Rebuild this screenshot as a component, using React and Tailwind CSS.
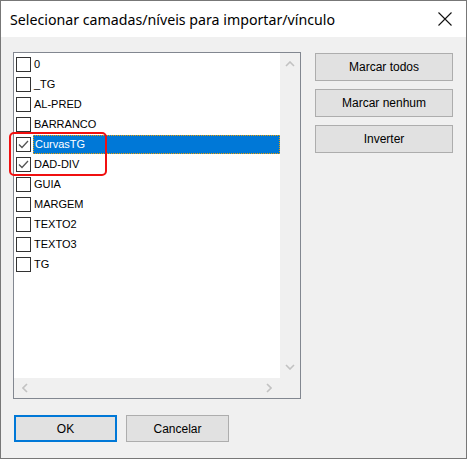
import { useState } from 'react';

const layers = ['0', '_TG', 'AL-PRED', 'BARRANCO', 'CurvasTG', 'DAD-DIV', 'GUIA', 'MARGEM', 'TEXTO2', 'TEXTO3', 'TG'];

function Chevron({ dir }) {
  const paths = {
    up: 'M1 5 L5 1 L9 5',
    down: 'M1 1 L5 5 L9 1',
    left: 'M5 1 L1 5 L5 9',
    right: 'M1 1 L5 5 L1 9',
  };
  const vertical = dir === 'up' || dir === 'down';
  return (
    <svg width={vertical ? 10 : 6} height={vertical ? 6 : 10} viewBox={vertical ? '0 0 10 6' : '0 0 6 10'}>
      <path d={paths[dir]} fill="none" stroke="#c2c2c2" strokeWidth="1.6" />
    </svg>
  );
}

function Check({ checked }) {
  return (
    <div className="w-[15px] h-[15px] border border-[#333] bg-white flex items-center justify-center shrink-0">
      {checked && (
        <svg width="11" height="9" viewBox="0 0 11 9">
          <path d="M1 4.5 L4 7.5 L10 1" fill="none" stroke="#555" strokeWidth="1.3" />
        </svg>
      )}
    </div>
  );
}

function Button({ children, primary, className = '' }) {
  return (
    <button
      className={
        'bg-[#e1e1e1] text-[12px] text-black flex items-center justify-center ' +
        (primary ? 'border-2 border-[#0078d7] ' : 'border border-[#adadad] ') +
        className
      }
    >
      {children}
    </button>
  );
}

export default function App() {
  const [checked] = useState({ CurvasTG: true, 'DAD-DIV': true });
  const selected = 'CurvasTG';

  return (
    <div className="w-[467px] h-[459px] border border-[#777] bg-[#f0f0f0] flex flex-col" style={{ fontFamily: '"Liberation Sans", Arial, sans-serif' }}>
      <div className="h-[36px] bg-white flex items-center justify-between pl-[9px] pr-[14px] shrink-0">
        <span className="text-[14.2px] text-black pt-[1px]" style={{ fontFamily: '"Noto Sans", "Open Sans", sans-serif' }}>
          Selecionar camadas/níveis para importar/vínculo
        </span>
        <svg width="14" height="14" viewBox="0 0 14 14">
          <path d="M0.5 0.5 L13.5 13.5 M13.5 0.5 L0.5 13.5" stroke="#111" strokeWidth="1.1" />
        </svg>
      </div>

      <div className="flex-1 relative pl-[12px] pt-[15px]">
        <div className="flex gap-[14px]">
          <div className="w-[288px] h-[347px] border border-[#828790] flex flex-col">
            <div className="flex flex-1 min-h-0">
              <div className="flex-1 bg-white pt-[1px]">
                {layers.map((name) => {
                  const sel = name === selected;
                  return (
                    <div key={name} className="h-[20px] flex items-center pl-[2px]">
                      <Check checked={!!checked[name]} />
                      <div
                        className={
                          'ml-[2px] flex-1 h-[19px] flex items-center pl-[1px] text-[11px] ' +
                          (sel ? 'bg-[#0078d7] text-white border border-dotted border-[#f0a000]' : 'text-black')
                        }
                      >
                        {name}
                      </div>
                    </div>
                  );
                })}
              </div>
              <div className="w-[20px] bg-[#f0f0f0] flex flex-col items-center justify-between py-[8px]">
                <Chevron dir="up" />
                <Chevron dir="down" />
              </div>
            </div>
            <div className="h-[20px] bg-[#f0f0f0] flex items-center justify-between pl-[8px] pr-[28px] shrink-0">
              <Chevron dir="left" />
              <Chevron dir="right" />
            </div>
          </div>

          <div className="flex flex-col gap-[8px] pt-[1px]">
            <Button className="w-[138px] h-[28px]">Marcar todos</Button>
            <Button className="w-[138px] h-[28px]">Marcar nenhum</Button>
            <Button className="w-[138px] h-[28px]">Inverter</Button>
          </div>
        </div>

        <div className="flex gap-[9px] mt-[16px] pl-[1px]">
          <Button primary className="w-[103px] h-[27px]">OK</Button>
          <Button className="w-[103px] h-[27px]">Cancelar</Button>
        </div>

        <div className="absolute left-[8px] top-[95px] w-[98px] h-[44px] border-[2.5px] border-[#f01010] rounded-[5px] pointer-events-none" />
      </div>
    </div>
  );
}
